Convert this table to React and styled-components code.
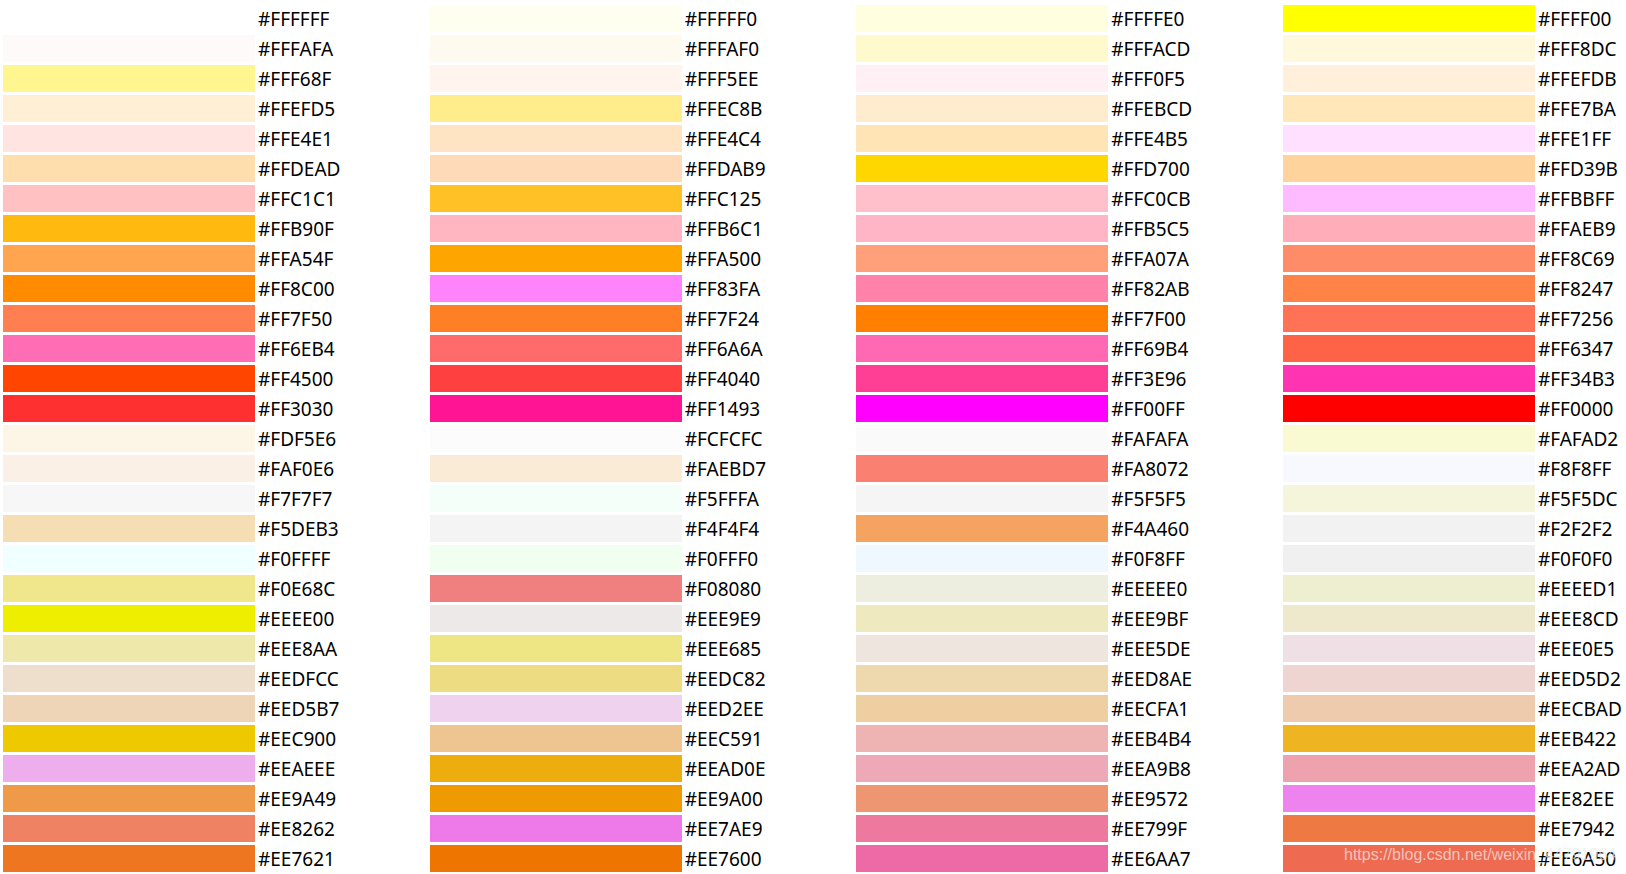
import React from "react";
import styled, { createGlobalStyle } from "styled-components";

const columns = [
  [
    "FFFFFF", "FFFAFA", "FFF68F", "FFEFD5", "FFE4E1", "FFDEAD", "FFC1C1", "FFB90F",
    "FFA54F", "FF8C00", "FF7F50", "FF6EB4", "FF4500", "FF3030", "FDF5E6", "FAF0E6",
    "F7F7F7", "F5DEB3", "F0FFFF", "F0E68C", "EEEE00", "EEE8AA", "EEDFCC", "EED5B7",
    "EEC900", "EEAEEE", "EE9A49", "EE8262", "EE7621",
  ],
  [
    "FFFFF0", "FFFAF0", "FFF5EE", "FFEC8B", "FFE4C4", "FFDAB9", "FFC125", "FFB6C1",
    "FFA500", "FF83FA", "FF7F24", "FF6A6A", "FF4040", "FF1493", "FCFCFC", "FAEBD7",
    "F5FFFA", "F4F4F4", "F0FFF0", "F08080", "EEE9E9", "EEE685", "EEDC82", "EED2EE",
    "EEC591", "EEAD0E", "EE9A00", "EE7AE9", "EE7600",
  ],
  [
    "FFFFE0", "FFFACD", "FFF0F5", "FFEBCD", "FFE4B5", "FFD700", "FFC0CB", "FFB5C5",
    "FFA07A", "FF82AB", "FF7F00", "FF69B4", "FF3E96", "FF00FF", "FAFAFA", "FA8072",
    "F5F5F5", "F4A460", "F0F8FF", "EEEEE0", "EEE9BF", "EEE5DE", "EED8AE", "EECFA1",
    "EEB4B4", "EEA9B8", "EE9572", "EE799F", "EE6AA7",
  ],
  [
    "FFFF00", "FFF8DC", "FFEFDB", "FFE7BA", "FFE1FF", "FFD39B", "FFBBFF", "FFAEB9",
    "FF8C69", "FF8247", "FF7256", "FF6347", "FF34B3", "FF0000", "FAFAD2", "F8F8FF",
    "F5F5DC", "F2F2F2", "F0F0F0", "EEEED1", "EEE8CD", "EEE0E5", "EED5D2", "EECBAD",
    "EEB422", "EEA2AD", "EE82EE", "EE7942", "EE6A50",
  ],
];

const GlobalStyle = createGlobalStyle`
  html, body {
    margin: 0;
    padding: 0;
    background: #fff;
    overflow: hidden;
  }
  body {
    font-family: "Noto Sans", "Liberation Sans", sans-serif;
  }
`;

const Page = styled.div`
  position: relative;
  width: 1626px;
  height: 874px;
  overflow: hidden;
  background: #fff;
`;

const Grid = styled.div`
  display: grid;
  grid-template-columns: repeat(4, 426.67px);
  padding: 5px 0 0 3px;
`;

const Column = styled.div`
  display: flex;
  flex-direction: column;
  gap: 3px;
`;

const Row = styled.div`
  display: flex;
  align-items: center;
  height: 27px;
`;

const Swatch = styled.div`
  width: 252px;
  height: 27px;
  flex: none;
  background: ${(p) => p.$color};
`;

const Label = styled.span`
  margin: 2px 0 0 3px;
  font-size: 19px;
  line-height: 27px;
  color: #000;
  white-space: nowrap;
`;

const Watermark = styled.div`
  position: absolute;
  left: 1344px;
  top: 846px;
  font-family: "Liberation Sans", Arial, sans-serif;
  font-size: 16px;
  line-height: 18px;
  color: rgba(235, 235, 235, 0.72);
  white-space: nowrap;
  pointer-events: none;
`;

export default function App() {
  return (
    <Page>
      <GlobalStyle />
      <Grid>
        {columns.map((col, i) => (
          <Column key={i}>
            {col.map((hex) => (
              <Row key={hex}>
                <Swatch $color={`#${hex}`} />
                <Label>#{hex}</Label>
              </Row>
            ))}
          </Column>
        ))}
      </Grid>
      <Watermark>https://blog.csdn.net/weixin_44791964</Watermark>
    </Page>
  );
}
